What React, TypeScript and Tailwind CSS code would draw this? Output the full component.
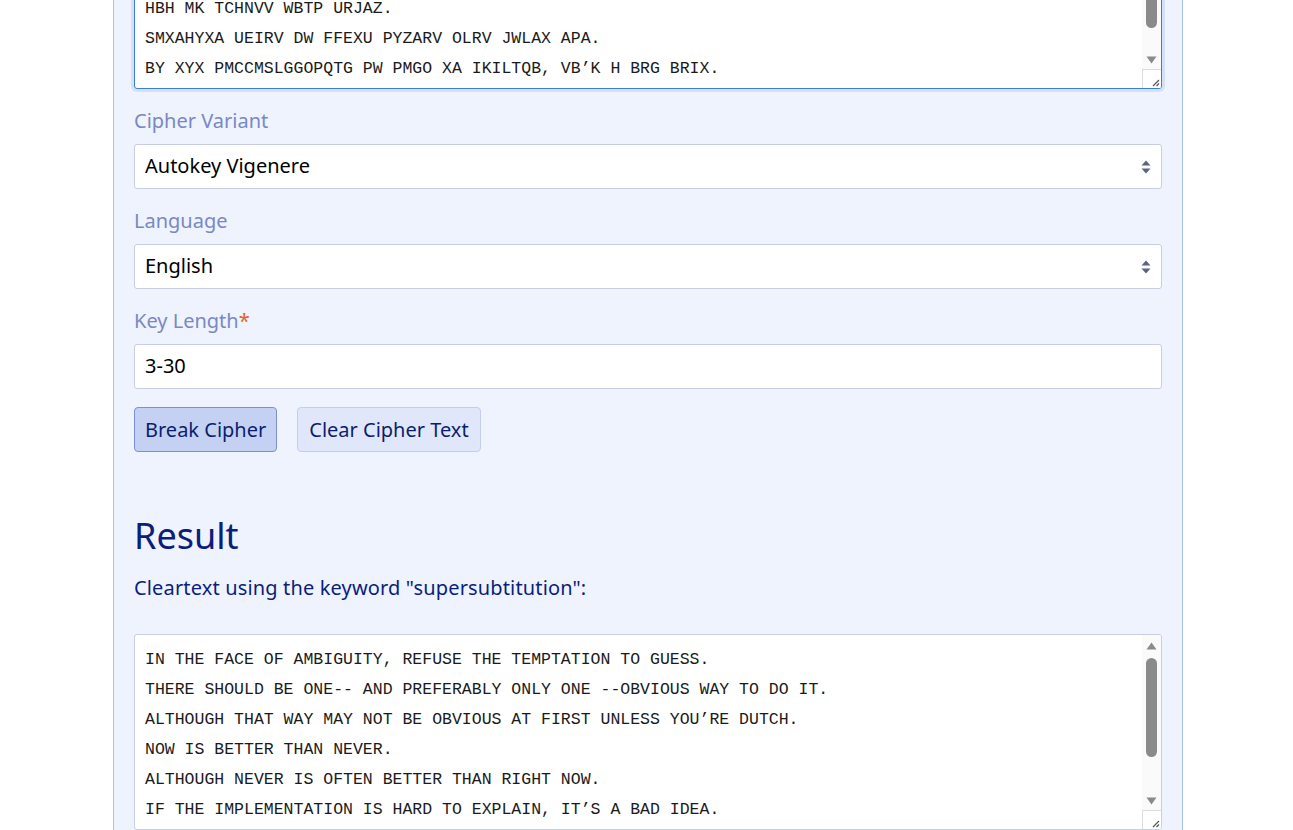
import React from 'react';

const cipherLines = [
  'HBH MK TCHNVV WBTP URJAZ.',
  'SMXAHYXA UEIRV DW FFEXU PYZARV OLRV JWLAX APA.',
  'BY XYX PMCCMSLGGOPQTG PW PMGO XA IKILTQB, VB’K H BRG BRIX.',
];

const resultLines = [
  'IN THE FACE OF AMBIGUITY, REFUSE THE TEMPTATION TO GUESS.',
  'THERE SHOULD BE ONE-- AND PREFERABLY ONLY ONE --OBVIOUS WAY TO DO IT.',
  'ALTHOUGH THAT WAY MAY NOT BE OBVIOUS AT FIRST UNLESS YOU’RE DUTCH.',
  'NOW IS BETTER THAN NEVER.',
  'ALTHOUGH NEVER IS OFTEN BETTER THAN RIGHT NOW.',
  'IF THE IMPLEMENTATION IS HARD TO EXPLAIN, IT’S A BAD IDEA.',
];

const mono = { fontFamily: '"Liberation Mono", monospace' };

const Triangle = ({ up }: { up?: boolean }) => (
  <svg width="11" height="8" viewBox="0 0 11 8">
    {up ? <path d="M5.5 0.5 L10.5 7.5 L0.5 7.5 Z" fill="#8a8a8a" /> : <path d="M0.5 0.5 L10.5 0.5 L5.5 7.5 Z" fill="#8a8a8a" />}
  </svg>
);

const ResizeGrip = () => (
  <svg width="9" height="9" viewBox="0 0 9 9">
    <path d="M8 2 L2 8 M8 5.5 L5.5 8" stroke="#555" strokeWidth="1.2" fill="none" />
  </svg>
);

// fake native scrollbar column so the textareas look like the Windows screenshot
const Scrollbar = ({ thumbTop, thumbHeight, showUp = true }: { thumbTop: number; thumbHeight: number; showUp?: boolean }) => (
  <div className="w-[19px] flex flex-col bg-[#fafafa] shrink-0">
    <div className="flex-1 relative">
      {showUp && (
        <div className="h-[16px] flex items-center justify-center mt-[3px]">
          <Triangle up />
        </div>
      )}
      <div
        className="absolute left-[4px] w-[11px] rounded-full bg-[#8a8a8a]"
        style={{ top: thumbTop, height: thumbHeight }}
      />
      <div className="absolute bottom-[4px] left-0 right-0 h-[10px] flex items-center justify-center">
        <Triangle />
      </div>
    </div>
    <div className="h-[19px] border-l border-t border-[#dcdcdc] bg-white flex items-end justify-end pr-[1px] pb-[1px]">
      <ResizeGrip />
    </div>
  </div>
);

const Label = ({ children }: { children: React.ReactNode }) => (
  <label className="block mt-4 mb-[9px] pt-[1px] h-[30px] text-[20px] leading-[30px] text-[#7a88c4]">{children}</label>
);

const SelectBox = ({ value }: { value: string }) => (
  <div className="h-[45px] bg-white border border-[#c8cde0] rounded-[3px] flex items-center justify-between pl-[10px] pr-[10px] text-[20px] text-black">
    <span className="-mt-[1px]">{value}</span>
    <svg width="10" height="16" viewBox="0 0 10 16">
      <path d="M5 1.5 L9.5 6.5 L0.5 6.5 Z" fill="#5b6385" />
      <path d="M0.5 9.5 L9.5 9.5 L5 14.5 Z" fill="#5b6385" />
    </svg>
  </div>
);

const App = () => {
  return (
    <div className="min-h-screen bg-white overflow-hidden" style={{ fontFamily: '"Noto Sans", sans-serif' }}>
      <div className="w-[1070px] ml-[113px] bg-[#eef3fe] border-x border-[#a9c0f0] px-5 pb-10">
        {/* cipher text box, scrolled so only its bottom shows */}
        <div className="-mt-[31px] h-[120px] bg-white border border-[#3b7ddd] rounded-[3px] shadow-[0_0_0_3px_#d3e1f8] flex overflow-hidden">
          <div className="flex-1 flex flex-col justify-end pl-[10px] pb-[4px] text-[16.5px] leading-[30px] text-[#1a1a1a] whitespace-pre" style={mono}>
            {cipherLines.map((l) => (
              <div key={l}>{l}</div>
            ))}
          </div>
          <Scrollbar thumbTop={0} thumbHeight={58} showUp={false} />
        </div>

        <Label>Cipher Variant</Label>
        <SelectBox value="Autokey Vigenere" />

        <Label>Language</Label>
        <SelectBox value="English" />

        <Label>
          Key Length<span className="text-[#e8620f]">*</span>
        </Label>
        <div className="h-[45px] bg-white border border-[#c8cde0] rounded-[3px] flex items-center pl-[10px] text-[20px] text-black">
          <span className="-mt-[1px]">3-30</span>
        </div>

        <div className="flex gap-5 mt-[18px]">
          <button className="h-[45px] px-[10px] bg-[#c5d1f3] border border-[#7d8fd3] rounded-[4px] text-[20px] text-[#0b1e6e]">
            Break Cipher
          </button>
          <button className="h-[45px] px-[11px] bg-[#e0e7fa] border border-[#c2cdf0] rounded-[4px] text-[20px] text-[#0b1e6e]">
            Clear Cipher Text
          </button>
        </div>

        <h2 className="mt-[62px] text-[36px] leading-[43px] text-[#0b1e7b]">Result</h2>
        <p className="mt-4 text-[20px] leading-[30px] text-[#0b1e7b] tracking-[0.15px]">
          Cleartext using the keyword "supersubtitution":
        </p>

        <div className="mt-[31px] h-[196px] bg-white border border-[#c8cde0] rounded-[3px] flex overflow-hidden">
          <div className="flex-1 pt-[10px] pl-[10px] text-[16.5px] leading-[30px] text-[#1a1a1a] whitespace-pre overflow-hidden" style={mono}>
            {resultLines.map((l) => (
              <div key={l}>{l}</div>
            ))}
          </div>
          <Scrollbar thumbTop={23} thumbHeight={99} />
        </div>
      </div>
    </div>
  );
};

export default App;
